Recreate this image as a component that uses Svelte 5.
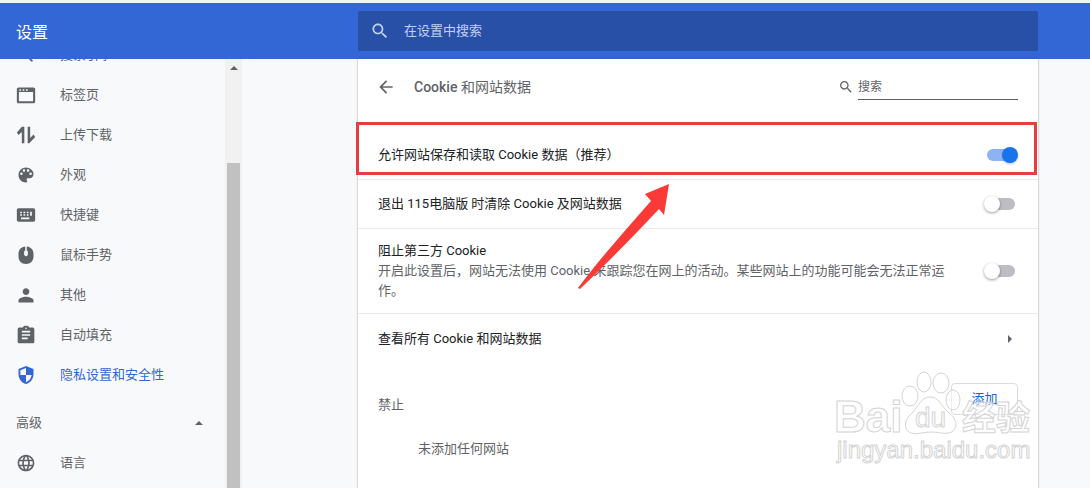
<script lang="ts">
	type Item = { icon: string; label: string; active?: boolean };

	const icons: Record<string, string> = {
		search:
			'M15.5 14h-.79l-.28-.27C15.41 12.59 16 11.11 16 9.5 16 5.91 13.09 3 9.5 3S3 5.91 3 9.5 5.91 16 9.5 16c1.61 0 3.09-.59 4.23-1.57l.27.28v.79l5 4.99L20.49 19l-4.99-5zm-6 0C7.01 14 5 11.99 5 9.5S7.01 5 9.5 5 14 7.01 14 9.5 11.99 14 9.5 14z',
		tab: 'M3 3h18c1 0 2 1 2 2v15c0 1-1 2-2 2H3c-1 0-2-1-2-2V5c0-1 1-2 2-2zM3.500 8.500v11h17v-11zM4 5v2h2V5zm4 0v2h2V5zm4 0v2h2V5z',
		transfer: 'M7 2h3v20H7V8.500L3 12l-2-3zM14 2h3v13.500l4-4 2 3L16 22h-2z',
		palette:
			'M12 3c-4.970 0-9 4.030-9 9s4.030 9 9 9c.83 0 1.500-.67 1.500-1.500 0-.39-.15-.74-.39-1.010-.23-.26-.38-.61-.38-.99 0-.83.67-1.500 1.500-1.500H16c2.760 0 5-2.240 5-5 0-4.420-4.030-8-9-8zm-5.500 9c-.83 0-1.500-.67-1.500-1.500S5.670 9 6.500 9 8 9.670 8 10.500 7.330 12 6.500 12zm3-4C8.670 8 8 7.330 8 6.500S8.670 5 9.500 5s1.500.67 1.500 1.500S10.330 8 9.500 8zm5 0c-.83 0-1.500-.67-1.500-1.500S13.670 5 14.500 5s1.500.67 1.500 1.500S15.330 8 14.500 8zm3 4c-.83 0-1.500-.67-1.500-1.500S16.670 9 17.500 9s1.500.67 1.500 1.500-.67 1.500-1.500 1.500z',
		keyboard:
			'M3 4h18a2 2 0 0 1 2 2v12a2 2 0 0 1-2 2H3a2 2 0 0 1-2-2V6c0-1.100.9-2 2-2zm2 4v2h2V8zm4 0v2h2V8zm4 0v2h2V8zM5 11v2h2v-2zm4 0v2h2v-2zm4 0v2h2v-2zm4-3v5h2V8zM6 15v2h10v-2z',
		mouse: 'M11 0.500C5.500 1 2 5 2 10v4c0 6 4 10 10 10s10-4 10-10v-4c0-5-3.500-9-9-9.500V6c1 .4 1.500 1 1.500 2v3c0 1.500-1 2.500-2.500 2.500S9.500 12.500 9.500 11V8c0-1 .5-1.600 1.500-2z',
		person:
			'M12 12c2.210 0 4-1.790 4-4s-1.790-4-4-4-4 1.790-4 4 1.790 4 4 4zm0 2c-3 0-9 1.500-9 4.500V21h18v-2.500c0-3-6-4.500-9-4.500z',
		clipboard:
			'M20 3h-4.200C15.400 1.800 14.300 1 12 1S8.600 1.800 8.200 3H4a2 2 0 0 0-2 2v15c0 1.100.9 2 2 2h16a2 2 0 0 0 2-2V5a2 2 0 0 0-2-2zm-8 0c.55 0 1 .45 1 1s-.45 1-1 1-1-.45-1-1 .45-1 1-1zm2 14H7v-2h7zm3-4H7v-2h10zm0-4H7V7h10z',
		shield:
			'M12 0 2 4v7c0 6.100 4.200 11.500 10 13 5.800-1.500 10-6.900 10-13V4zm0 12h7.500c-.6 4.500-3.600 8.200-7.500 9.500V12H4.500V5.700L12 2.700z',
		globe:
			'M11.990 2C6.470 2 2 6.480 2 12s4.470 10 9.990 10C17.520 22 22 17.520 22 12S17.520 2 11.990 2zm6.930 6h-2.950c-.32-1.250-.78-2.450-1.380-3.560 1.840.63 3.370 1.910 4.330 3.560zM12 4.040c.83 1.200 1.480 2.530 1.910 3.960h-3.820c.43-1.430 1.080-2.760 1.910-3.960zM4.260 14C4.100 13.360 4 12.690 4 12s.1-1.360.26-2h3.380c-.08.66-.14 1.320-.14 2s.06 1.340.14 2zm.82 2h2.950c.32 1.250.78 2.450 1.380 3.560-1.840-.63-3.370-1.900-4.330-3.560zm2.950-8H5.080c.96-1.660 2.490-2.930 4.330-3.560C8.810 5.550 8.350 6.750 8.030 8zM12 19.960c-.83-1.200-1.480-2.530-1.910-3.960h3.820c-.43 1.430-1.080 2.760-1.910 3.960zM14.340 14H9.660c-.09-.66-.16-1.320-.16-2s.07-1.350.16-2h4.680c.09.65.16 1.320.16 2s-.07 1.340-.16 2zm.25 5.560c.6-1.110 1.060-2.310 1.380-3.560h2.950c-.96 1.650-2.490 2.930-4.330 3.560zM16.360 14c.08-.66.14-1.320.14-2s-.06-1.340-.14-2h3.380c.16.64.26 1.310.26 2s-.1 1.360-.26 2z',
		back: 'M20 11H7.830l5.590-5.590L12 4l-8 8 8 8 1.410-1.410L7.830 13H20v-2z'
	};

	const items: Item[] = [
		{ icon: 'search', label: '搜索引擎' },
		{ icon: 'tab', label: '标签页' },
		{ icon: 'transfer', label: '上传下载' },
		{ icon: 'palette', label: '外观' },
		{ icon: 'keyboard', label: '快捷键' },
		{ icon: 'mouse', label: '鼠标手势' },
		{ icon: 'person', label: '其他' },
		{ icon: 'clipboard', label: '自动填充' },
		{ icon: 'shield', label: '隐私设置和安全性', active: true }
	];

	let allowCookies = $state(true);
	let clearOnExit = $state(false);
	let blockThirdParty = $state(false);
</script>

{#snippet icon(name: string)}
	<svg viewBox="0 0 24 24" aria-hidden="true"><path fill-rule="evenodd" d={icons[name]} /></svg>
{/snippet}

{#snippet menuItem(item: Item)}
	<a href="#top" class="item {item.icon}" class:active={item.active}>
		{@render icon(item.icon)}
		<span>{item.label}</span>
	</a>
{/snippet}

<div class="page">
	<header>
		<h1>设置</h1>
		<div class="column">
			<label class="top-search">
				{@render icon('search')}
				<input type="text" placeholder="在设置中搜索" aria-label="在设置中搜索" />
			</label>
		</div>
	</header>

	<div class="body">
		<aside>
			<nav>
				{#each items as item}
					{@render menuItem(item)}
				{/each}
				<button class="advanced">
					<span>高级</span>
					<i class="caret up"></i>
				</button>
				{@render menuItem({ icon: 'globe', label: '语言' })}
			</nav>
			<div class="scrollbar">
				<i class="caret up"></i>
				<div class="thumb"></div>
			</div>
		</aside>

		<main class="column">
			<section class="card">
				<div class="title">
					<button class="back" aria-label="返回">{@render icon('back')}</button>
					<h2><b>Cookie</b> 和网站数据</h2>
					<label class="site-search">
						{@render icon('search')}
						<input type="text" placeholder="搜索" aria-label="搜索" />
					</label>
				</div>

				<label class="row marked">
					<span class="text">允许网站保存和读取 Cookie 数据（推荐）</span>
					<input type="checkbox" class="toggle" bind:checked={allowCookies} />
				</label>
				<label class="row">
					<span class="text">退出 115电脑版 时清除 Cookie 及网站数据</span>
					<input type="checkbox" class="toggle" bind:checked={clearOnExit} />
				</label>
				<label class="row tall">
					<span class="text">
						阻止第三方 Cookie
						<small>开启此设置后，网站无法使用 Cookie 来跟踪您在网上的活动。某些网站上的功能可能会无法正常运作。</small>
					</span>
					<input type="checkbox" class="toggle" bind:checked={blockThirdParty} />
				</label>
				<button class="row link">
					<span class="text">查看所有 Cookie 和网站数据</span>
					<i class="caret right"></i>
				</button>

				<div class="list-head">
					<h3>禁止</h3>
					<button class="add">添加</button>
				</div>
				<p class="empty">未添加任何网站</p>

				<svg class="arrow" viewBox="0 0 94 108" aria-hidden="true">
					<path d="M92 2 68 12 74 19C48 49 24 75 1 106L3 107C31 80 57 54 82 27L87 33Z" />
				</svg>

				<svg class="watermark" viewBox="0 0 204 100" aria-hidden="true">
					<text x="4" y="62" class="brand">Bai</text>
					<g>
						<ellipse cx="80" cy="26" rx="8" ry="10" />
						<ellipse cx="94" cy="12" rx="7" ry="10" />
						<ellipse cx="111" cy="13" rx="8" ry="10" />
						<ellipse cx="123" cy="30" rx="7" ry="10" />
						<path d="M100 27c-9 0-11 9-17 15-8 7-9 13-6 18 5 7 15 2 24 2s18 4 23-2c4-5 2-12-6-18-7-6-9-15-18-15z" />
					</g>
					<text x="85" y="57" class="du">du</text>
					<text x="132" y="60" class="han">经验</text>
					<text x="7" y="88" class="site">jingyan.baidu.com</text>
				</svg>
			</section>
		</main>
	</div>
</div>

<style>
	:global(body) {
		background: #f8f9fa;
	}

	.page {
		display: flex;
		flex-direction: column;
		box-sizing: border-box;
		height: 100vh;
		overflow: hidden;
		border-top: 3px solid #f1f3f5;
		font: 13px/20px Roboto, 'Noto Sans CJK SC', sans-serif;
		color: #5f6368;
	}

	h1,
	h2,
	h3,
	p {
		margin: 0;
		font-size: 13px;
		font-weight: 400;
	}

	input,
	button {
		margin: 0;
		padding: 0;
		border: none;
		outline: none;
		background: transparent;
		color: inherit;
		font: inherit;
		text-align: left;
	}

	input[type='text'] {
		flex: 1;
		min-width: 0;
	}

	input::placeholder {
		color: inherit;
		opacity: 1;
	}

	svg {
		flex: none;
		fill: currentColor;
	}

	header {
		display: flex;
		flex: none;
		align-items: center;
		height: 56px;
		background: #3367d6;
		color: #fff;
	}

	h1 {
		box-sizing: border-box;
		width: 306px;
		padding: 4px 0 0 16px;
		font-size: 16px;
	}

	.column {
		flex: 1;
		min-width: 0;
		padding: 0 52px;
	}

	.top-search {
		display: flex;
		align-items: center;
		gap: 14px;
		height: 40px;
		max-width: 680px;
		box-sizing: border-box;
		margin: 0 auto;
		padding: 0 12px;
		border-radius: 2px;
		background: #2850a7;
		color: #c2d1f2;
	}

	.top-search svg {
		width: 20px;
		height: 20px;
	}

	.body {
		display: flex;
		flex: 1;
		min-height: 0;
	}

	aside {
		display: flex;
		flex: none;
		width: 242px;
		margin-right: 64px;
		overflow: hidden;
	}

	nav {
		flex: 1;
		margin-top: -24px;
	}

	.item {
		display: flex;
		align-items: center;
		gap: 24px;
		height: 40px;
		padding-left: 16px;
		color: inherit;
		text-decoration: none;
	}

	.item svg {
		width: 20px;
		height: 20px;
	}

	.item.active {
		color: #3367d6;
	}

	.item.shield svg,
	.item.mouse svg {
		width: 18px;
		height: 18px;
		padding: 1px;
	}

	.advanced {
		display: flex;
		align-items: center;
		justify-content: space-between;
		width: 100%;
		height: 40px;
		margin-top: 8px;
		padding: 0 22px 0 16px;
	}

	.caret {
		border: 4px solid transparent;
	}

	.caret.up {
		border-top: none;
		border-bottom-color: #5f6368;
	}

	.caret.right {
		margin-right: 6px;
		border-right: none;
		border-left-color: #5f6368;
	}

	.scrollbar {
		display: flex;
		flex-direction: column;
		align-items: center;
		width: 17px;
		padding-top: 7px;
		background: #f1f1f1;
	}

	.thumb {
		flex: 1;
		width: 13px;
		margin-top: 93px;
		background: #c1c1c1;
	}

	.card {
		position: relative;
		min-height: 100%;
		max-width: 680px;
		margin: 0 auto;
		background: #fff;
		box-shadow: 0 0 2px rgba(60, 64, 67, 0.5);
	}

	.title {
		display: flex;
		align-items: center;
		height: 56px;
		margin-bottom: 16px;
		padding: 0 20px 0 18px;
	}

	.back {
		display: flex;
		margin-right: 18px;
	}

	.back svg {
		width: 20px;
		height: 20px;
	}

	h2 {
		flex: 1;
		font-size: 14px;
	}

	h2 b {
		font-weight: 500;
	}

	.site-search {
		display: flex;
		align-items: center;
		gap: 4px;
	}

	.site-search svg {
		width: 16px;
		height: 16px;
	}

	.site-search input {
		flex: none;
		width: 160px;
		height: 24px;
		border-bottom: 1px solid #5f6368;
		font-size: 12px;
	}

	.row {
		display: flex;
		align-items: center;
		justify-content: space-between;
		box-sizing: border-box;
		width: 100%;
		height: 49px;
		padding: 0 20px;
		border-bottom: 1px solid #e8eaed;
		color: #202124;
	}

	.row.tall {
		height: 85px;
	}

	.row.link {
		border-bottom: none;
	}

	.marked {
		position: relative;
	}

	.marked::after {
		content: '';
		position: absolute;
		inset: -9px 1px 4px -2px;
		border: 3px solid #e53e3e;
	}

	.text {
		flex: 1;
		padding-right: 36px;
	}

	small {
		display: block;
		font-size: 13px;
		color: #5f6368;
	}

	.toggle {
		position: relative;
		appearance: none;
		display: flex;
		align-items: center;
		flex: none;
		width: 34px;
		height: 16px;
	}

	.toggle::before {
		content: '';
		flex: 1;
		height: 12px;
		margin: 0 3px;
		border-radius: 6px;
		background: #bdbdc4;
	}

	.toggle::after {
		content: '';
		position: absolute;
		left: 0;
		width: 16px;
		height: 16px;
		border-radius: 50%;
		background: #fff;
		box-shadow: 0 1px 3px rgba(0, 0, 0, 0.4);
	}

	.toggle:checked::before {
		background: #8cb4f5;
	}

	.toggle:checked::after {
		left: auto;
		right: 0;
		background: #1a73e8;
		box-shadow: 0 1px 2px rgba(26, 115, 232, 0.4);
	}

	.list-head {
		display: flex;
		align-items: flex-end;
		justify-content: space-between;
		margin-top: 20px;
		padding: 0 20px;
	}

	.add {
		box-sizing: border-box;
		width: 67px;
		height: 32px;
		border: 1px solid #dadce0;
		border-radius: 4px;
		color: #1967d2;
		text-align: center;
	}

	.empty {
		padding: 24px 60px;
	}

	/* drawn over the card */
	.arrow {
		position: absolute;
		top: 123px;
		left: 219px;
		width: 94px;
		height: 108px;
		fill: #f93a37;
	}

	.watermark {
		position: absolute;
		top: 311px;
		right: 4px;
		width: 204px;
		height: 100px;
		fill: rgba(255, 255, 255, 0.5);
		stroke: #d4d4d4;
		pointer-events: none;
	}

	.watermark text {
		font-family: 'Liberation Sans', 'Noto Sans CJK SC', sans-serif;
	}

	.watermark .brand {
		font-size: 44px;
		font-weight: 700;
	}

	.watermark .du {
		font-size: 28px;
	}

	.watermark .han {
		font-size: 34px;
		font-weight: 700;
	}

	.watermark .site {
		font-size: 24px;
	}
</style>
